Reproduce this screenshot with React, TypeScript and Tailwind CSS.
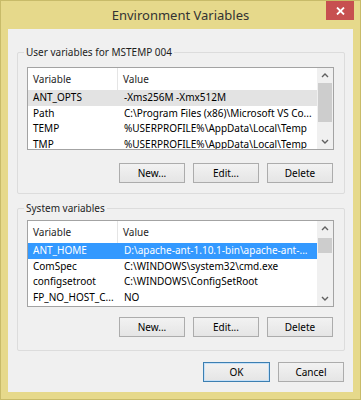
import React from 'react';

interface Row {
  name: string;
  value: string;
}

const userRows: Row[] = [
  { name: 'ANT_OPTS', value: '-Xms256M -Xmx512M' },
  { name: 'Path', value: 'C:\\Program Files (x86)\\Microsoft VS Co...' },
  { name: 'TEMP', value: '%USERPROFILE%\\AppData\\Local\\Temp' },
  { name: 'TMP', value: '%USERPROFILE%\\AppData\\Local\\Temp' },
];

const systemRows: Row[] = [
  { name: 'ANT_HOME', value: 'D:\\apache-ant-1.10.1-bin\\apache-ant-...' },
  { name: 'ComSpec', value: 'C:\\WINDOWS\\system32\\cmd.exe' },
  { name: 'configsetroot', value: 'C:\\WINDOWS\\ConfigSetRoot' },
  { name: 'FP_NO_HOST_C...', value: 'NO' },
];

function Chevron({ down }: { down?: boolean }) {
  return (
    <svg width="8" height="5" viewBox="0 0 8 5" className="text-[#606060]">
      <path
        d={down ? 'M1 1 L4 4 L7 1' : 'M1 4 L4 1 L7 4'}
        fill="none"
        stroke="currentColor"
        strokeWidth="1.4"
      />
    </svg>
  );
}

function VarList({
  rows,
  height,
  selected,
  thumbTop,
  thumbHeight,
}: {
  rows: Row[];
  height: number;
  selected: 'focus' | 'blur';
  thumbTop: number;
  thumbHeight: number;
}) {
  return (
    <div
      className="w-[307px] border border-[#a3a3a3] bg-white flex overflow-hidden"
      style={{ height }}
    >
      <div className="flex-1 flex flex-col overflow-hidden">
        {/* Header */}
        <div className="h-[22px] flex shrink-0 text-[#1e1e1e]">
          <div className="w-[90px] border-r border-[#e5e5e5] pl-[5px] flex items-center">Variable</div>
          <div className="flex-1 pl-[5px] flex items-center">Value</div>
        </div>
        {rows.map((row, i) => {
          const isSel = i === 0;
          const sel =
            isSel && selected === 'focus'
              ? 'bg-[#3399ff] text-white'
              : isSel
                ? 'bg-[#e3e3e3] text-black'
                : 'text-black';
          return (
            <div key={row.name} className={`h-[15.5px] shrink-0 flex items-center whitespace-nowrap ${sel}`}>
              <div className="w-[90px] pl-[5px] overflow-hidden">{row.name}</div>
              <div className="flex-1 pl-[6px] overflow-hidden">{row.value}</div>
            </div>
          );
        })}
      </div>
      {/* Scrollbar */}
      <div className="w-[16px] bg-[#f0f0f0] flex flex-col relative">
        <div className="h-[15px] flex items-center justify-center">
          <Chevron />
        </div>
        <div className="flex-1" />
        <div className="h-[15px] flex items-center justify-center">
          <Chevron down />
        </div>
        <div
          className="absolute left-[1px] right-[1px] bg-[#cdcdcd]"
          style={{ top: thumbTop, height: thumbHeight }}
        />
      </div>
    </div>
  );
}

function Btn({ label, primary }: { label: string; primary?: boolean }) {
  return (
    <button
      className={`h-[20px] flex items-center justify-center border text-black bg-gradient-to-b from-[#f2f2f2] to-[#e5e5e5] ${
        primary ? 'w-[67px] border-[#3c7fb1] shadow-[inset_0_0_0_1px_#c6e0f7]' : 'w-[66px] border-[#acacac]'
      }`}
    >
      {label}
    </button>
  );
}

function GroupBox({
  title,
  height,
  children,
}: {
  title: string;
  height: number;
  children: React.ReactNode;
}) {
  return (
    <div
      className="w-[328px] border border-[#dcdcdc] rounded-[2px] relative flex flex-col"
      style={{ height }}
    >
      <div className="absolute top-[-8px] left-[6px] px-[2px] bg-[#f0f0f0] leading-[14px] text-[#1e1e1e]">
        {title}
      </div>
      {children}
    </div>
  );
}

export default function App() {
  return (
    <div className="w-[361px] h-[400px] bg-[#e6d98b] border border-[#c8bb69] relative flex flex-col font-['Noto_Sans',sans-serif] text-[10px]">
      {/* Title bar */}
      <div className="h-[28px] shrink-0 flex items-center justify-center text-[13px] text-[#333333] pt-[1px]">
        Environment Variables
      </div>
      <div className="absolute top-0 left-[325px] w-[28px] h-[19px] bg-[#c75050] flex items-center justify-center">
        <svg width="9" height="8" viewBox="0 0 9 8">
          <path d="M1 0.5 L8 7.5 M8 0.5 L1 7.5" stroke="white" strokeWidth="1.8" />
        </svg>
      </div>

      {/* Client area */}
      <div className="ml-[7px] w-[345px] h-[363px] bg-[#f0f0f0] border-t border-l border-[#f0f0f0] flex flex-col pl-[8px] pt-[22px]">
        <GroupBox title="User variables for MSTEMP 004" height={142}>
          <div className="pl-[9px] pt-[14px]">
            <VarList rows={userRows} height={83} selected="blur" thumbTop={15} thumbHeight={39} />
          </div>
          <div className="flex justify-end gap-[8px] pr-[11px] mt-[13px]">
            <Btn label="New..." />
            <Btn label="Edit..." />
            <Btn label="Delete" />
          </div>
        </GroupBox>

        <div className="mt-[14px]">
          <GroupBox title="System variables" height={143}>
            <div className="pl-[9px] pt-[11px]">
              <VarList rows={systemRows} height={87} selected="focus" thumbTop={17} thumbHeight={15} />
            </div>
            <div className="flex justify-end gap-[8px] pr-[11px] mt-[10px]">
              <Btn label="New..." />
              <Btn label="Edit..." />
              <Btn label="Delete" />
            </div>
          </GroupBox>
        </div>

        <div className="flex justify-end gap-[8px] pr-[9px] mt-[11px]">
          <Btn label="OK" primary />
          <Btn label="Cancel" />
        </div>
      </div>
    </div>
  );
}
